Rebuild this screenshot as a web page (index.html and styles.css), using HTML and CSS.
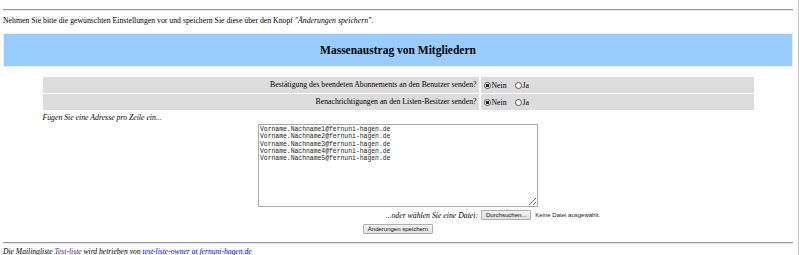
FILE: index.html
```html
<!DOCTYPE html>
<html lang="de">
<head>
    <meta charset="UTF-8">
    <meta name="viewport" content="width=device-width, initial-scale=1.0">
    <title>Massenaustrag von Mitgliedern</title>
    <link rel="stylesheet" href="styles.css">
</head>
<body>
    <hr class="rule">
    <p class="intro">Nehmen Sie bitte die gewünschten Einstellungen vor und speichern Sie diese über den Knopf <i>"Änderungen speichern"</i>.</p>

    <div class="banner">
        <h2>Massenaustrag von Mitgliedern</h2>
    </div>

    <form class="form" action="">
        <div class="options">
            <div class="row">
                <div class="question">Bestätigung des beendeten Abonnements an den Benutzer senden?</div>
                <div class="choice">
                    <label><input type="radio" name="ack" value="0" checked>Nein</label>
                    <label><input type="radio" name="ack" value="1">Ja</label>
                </div>
            </div>
            <div class="row">
                <div class="question">Benachrichtigungen an den Listen-Besitzer senden?</div>
                <div class="choice">
                    <label><input type="radio" name="notify" value="0" checked>Nein</label>
                    <label><input type="radio" name="notify" value="1">Ja</label>
                </div>
            </div>
            <p class="hint">Fügen Sie eine Adresse pro Zeile ein...</p>
        </div>

        <div class="center">
            <textarea class="addresses" name="unsubscribees">Vorname.Nachname1@fernuni-hagen.de
Vorname.Nachname2@fernuni-hagen.de
Vorname.Nachname3@fernuni-hagen.de
Vorname.Nachname4@fernuni-hagen.de
Vorname.Nachname5@fernuni-hagen.de</textarea>
        </div>

        <div class="file-row">
            <span class="file-label">...oder wählen Sie eine Datei:</span>
            <span class="file-pick">
                <button type="button" class="btn">Durchsuchen...</button>
                <span class="file-none">Keine Datei ausgewählt.</span>
            </span>
        </div>

        <div class="center submit-row">
            <button type="submit" class="btn">Änderungen speichern</button>
        </div>
    </form>

    <hr class="rule bottom">
    <p class="footer">Die Mailingliste <a href="#" class="visited">Test-liste</a> wird betrieben von <a href="#">test-liste-owner at fernuni-hagen.de</a></p>
</body>
</html>
```

FILE: styles.css
```css
html{
    min-height: 100%;
    border-right: 1px solid #c4c4c4;
    box-sizing: border-box;
}
body{
    margin: 0 5px 0 3px;
    padding-top: 4px;
    font-family: "Liberation Serif", "Times New Roman", serif;
    font-size: 7.75px;
    line-height: 9px;
    color: #000;
    background: #fff;
}
.rule{
    margin: 5px 0 0 0;
    height: 0;
    border: none;
    border-top: 1px solid #9a9a9a;
    border-bottom: 1px solid #e2e2e2;
}
.intro{
    margin: 5px 0 8px 0;
}
.banner{
    background-color: #99ccff;
    border: 1px solid #e8f2fc;
    height: 32px;
    display: flex;
    align-items: center;
    justify-content: center;
}
.banner h2{
    margin: 0;
    font-size: 11.5px;
    font-weight: bold;
}
.options{
    width: 90%;
    margin: 10px auto 0 auto;
}
.row{
    display: flex;
    gap: 2px;
    margin-bottom: 1px;
}
.question{
    width: 436px;
    flex: none;
    background-color: #dcdcdc;
    text-align: right;
    padding-right: 2px;
    box-sizing: border-box;
    height: 16px;
    line-height: 16px;
}
.choice{
    flex: 1;
    background-color: #dcdcdc;
    height: 16px;
    display: flex;
    align-items: center;
    gap: 8px;
    padding-left: 3px;
}
.choice label{
    display: flex;
    align-items: center;
}
.choice input{
    appearance: none;
    width: 7px;
    height: 7px;
    margin: 0 1px 0 0;
    border: 1px solid #555;
    border-radius: 50%;
    background: #fff;
}
.choice input:checked{
    background: radial-gradient(circle, #222 0 1.5px, #fff 2px);
}
.hint{
    margin: 3px 0 0 0;
    font-style: italic;
}
.center{
    display: flex;
    justify-content: center;
}
.addresses{
    width: 280px;
    height: 83px;
    box-sizing: border-box;
    margin: 2px 0 0 0;
    padding: 1px;
    border: 1px solid #a9a9a9;
    resize: both;
    font-family: "Liberation Mono", "Courier New", monospace;
    font-size: 6.4px;
    line-height: 7.3px;
    color: #222;
    outline: none;
}
.file-row{
    display: flex;
    margin-top: 3px;
    height: 10px;
    align-items: center;
}
.file-label{
    width: 478px;
    flex: none;
    text-align: right;
    font-style: italic;
    padding-right: 3px;
    box-sizing: border-box;
}
.file-pick{
    display: flex;
    align-items: center;
    gap: 4px;
}
.btn{
    font-family: "Liberation Sans", Arial, sans-serif;
    font-size: 6px;
    line-height: 7px;
    height: 10px;
    padding: 0 4px;
    color: #111;
    background: linear-gradient(#f2f2f2, #e0e0e0);
    border: 1px solid #b0b0b0;
    border-radius: 1px;
}
.file-none{
    font-family: "Liberation Sans", Arial, sans-serif;
    font-size: 6px;
    color: #222;
}
.submit-row{
    margin-top: 4px;
}
.bottom{
    margin-top: 8px;
}
.footer{
    margin: 3px 0 0 0;
    font-style: italic;
    font-size: 7.6px;
}
.footer a{
    color: #0000ee;
    text-decoration: none;
}
.footer a.visited{
    color: #551a8b;
}
```
